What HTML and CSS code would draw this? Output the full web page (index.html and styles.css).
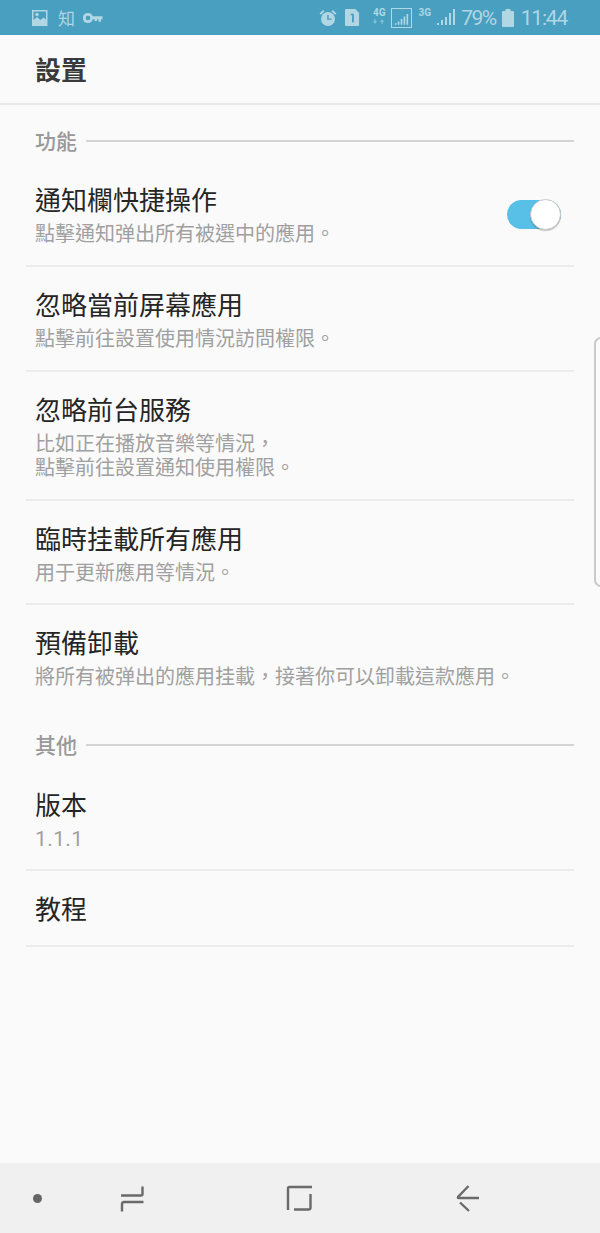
FILE: index.html
```html
<!DOCTYPE html>
<html lang="zh-Hant">
<head>
<meta charset="utf-8">
<title>設置</title>
<link rel="stylesheet" href="styles.css">
</head>
<body>
<div class="phone">
  <div class="status">
    <div class="status-left">
      <svg class="ic" width="18" height="18" viewBox="0 0 18 18"><path fill-rule="evenodd" d="M1 1h15.500v16H1zM2.500 2.500v8.500l3.500-3 3.500 3 3-2.500 2.500 2V2.500z"/><circle cx="6" cy="5.500" r="1.700"/></svg>
      <span class="st-zhi">知</span>
      <svg class="ic key" width="20" height="12" viewBox="0 0 20 12"><path fill-rule="evenodd" d="M5 1a5 5 0 0 1 4.700 3.300H19.500v3h-1.500v2.500h-2.500V7.300h-1.500v1.700h-2.500V7.300H9.700A5 5 0 1 1 5 1zM5 3.700a2.300 2.300 0 1 0 0 4.600 2.300 2.300 0 0 0 0-4.600z"/></svg>
    </div>
    <div class="status-right">
      <svg class="ic" width="18" height="18" viewBox="0 0 18 18"><path fill-rule="evenodd" d="M9 3a7 7 0 1 1 0 14A7 7 0 0 1 9 3zM8.200 6v4.800h4.300V9.400H9.700V6z"/><path d="M0.500 4.500 4 1l1.500 1.200L2 5.800zM17.500 4.500 14 1l-1.500 1.200L16 5.800z"/></svg>
      <svg class="ic sim" width="15" height="17" viewBox="0 0 16 18"><path fill-rule="evenodd" d="M1 0h10l4 4v13a1 1 0 0 1-1 1H1a1 1 0 0 1-1-1V1a1 1 0 0 1 1-1zM6 5v1.500h1.500V14h2V5z"/></svg>
      <div class="net"><span class="net-label">4G</span><svg width="12" height="5" viewBox="0 0 12 5" class="ic dim"><path d="M2 5 0 2h1.400V0h1.200v2H4zM9 0l2 3H9.600v2H8.400V3H7z"/></svg></div>
      <div class="signal-box"><svg class="ic" width="18" height="14" viewBox="0 0 18 14"><path d="M1 12h2v2H1zM4.500 10h2v4h-2zM8 7h2v7H8zM11.500 4h2v10h-2zM15 1h2v13h-2z"/></svg></div>
      <div class="net net-3g"><span class="net-label">3G</span></div>
      <svg class="ic signal" width="18" height="18" viewBox="0 0 18 18"><path d="M0 15h2v2H0zM4 12h2v5H4zM8 9h2v8H8zM12 5h2v12h-2zM16 1h2v16h-2z"/></svg>
      <span class="st-text">79%</span>
      <svg class="ic batt" width="12" height="18" viewBox="0 0 12 18"><path d="M3.500 0h5v2h2.500a1 1 0 0 1 1 1v14a1 1 0 0 1-1 1H1a1 1 0 0 1-1-1V3a1 1 0 0 1 1-1h2.500z"/></svg>
      <span class="st-text time">11:44</span>
    </div>
  </div>

  <header class="topbar"><h1>設置</h1></header>

  <main class="content">
    <div class="section"><span>功能</span><i></i></div>

    <div class="item with-toggle">
      <div>
        <div class="title">通知欄快捷操作</div>
        <div class="sub">點擊通知弹出所有被選中的應用。</div>
      </div>
      <div class="toggle"><b></b></div>
    </div>
    <div class="item">
      <div class="title">忽略當前屏幕應用</div>
      <div class="sub">點擊前往設置使用情況訪問權限。</div>
    </div>
    <div class="item">
      <div class="title">忽略前台服務</div>
      <div class="sub">比如正在播放音樂等情況，<br>點擊前往設置通知使用權限。</div>
    </div>
    <div class="item short">
      <div class="title">臨時挂載所有應用</div>
      <div class="sub">用于更新應用等情況。</div>
    </div>
    <div class="item last">
      <div class="title">預備卸載</div>
      <div class="sub">將所有被弹出的應用挂載，接著你可以卸載這款應用。</div>
    </div>

    <div class="section"><span>其他</span><i></i></div>

    <div class="item version">
      <div class="title">版本</div>
      <div class="sub num">1.1.1</div>
    </div>
    <div class="item single">
      <div class="title">教程</div>
    </div>
  </main>

  <div class="edge-handle"></div>

  <nav class="navbar">
    <span class="dot"></span>
    <svg class="nav-recent" width="26" height="28" viewBox="0 0 26 28"><path d="M1 10.500H21Q22.500 10.500 22.500 9V1.500M23.500 17H4Q2 17 2 19V26.500"/></svg>
    <svg class="nav-home" width="26" height="26" viewBox="0 0 26 26"><path d="M2 25V3.500Q2 2 3.500 2H26M8 24.500H22.500Q24.500 24.500 24.500 22.500V9"/></svg>
    <svg class="nav-back" width="26" height="28" viewBox="0 0 26 28"><path d="M12.500 1 2 12Q1.500 13 2.500 13H23M4 17.500 13 26"/></svg>
  </nav>
</div>
</body>
</html>
```
FILE: styles.css
```css
* { box-sizing: border-box; }
html, body { margin: 0; padding: 0; }
body { font-family: "Noto Sans CJK TC", "Noto Sans CJK SC", Roboto, sans-serif; background: #fafafa; }
.phone { position: relative; width: 600px; height: 1233px; display: flex; flex-direction: column; background: #fafafa; overflow: hidden; }

.status { height: 35px; background: #489fbf; display: flex; justify-content: space-between; align-items: center; padding: 0 33px 0 31px; color: #b1d6e4; flex: none; }
.status-left, .status-right { display: flex; align-items: center; }
.ic { fill: #b1d6e4; display: block; }
.dim { opacity: .6; }
.st-zhi { font-size: 17px; line-height: 20px; margin-left: 9px; margin-right: 8px; }
.status-right .sim { margin-left: 8px; }
.net { display: flex; flex-direction: column; align-items: center; margin-left: 12px; width: 14px; height: 22px; }
.net-label { font: 700 10px/12px Roboto, sans-serif; }
.net-3g { margin-left: 6px; width: 13px; }
.signal-box { width: 21px; height: 20px; border: 1px solid #b1d6e4; margin-left: 5px; display: flex; align-items: flex-end; justify-content: center; padding: 0 0 2px; }
.signal-box svg { width: 15px; height: 12px; }
.signal { margin-left: 6px; margin-top: -1px; }
.st-text { font: 400 21px/24px Roboto, sans-serif; letter-spacing: -1.500px; margin-left: 6px; }
.batt { margin-left: 6px; }
.time { margin-left: 7px; letter-spacing: -1.200px; }

.topbar { height: 70px; flex: none; border-bottom: 2px solid #e8e8e8; padding: 0 35px; display: flex; align-items: center; }
.topbar h1 { margin: 0; font-size: 26px; line-height: 36px; font-weight: 700; color: #3a3a3a; }

.content { flex: 1; padding: 0 26px; }
.section { display: flex; align-items: center; height: 36px; margin: 18px 0 3px; padding-left: 9px; }
.section span { font-size: 21px; line-height: 28px; font-weight: 500; color: #999; margin-right: 9px; padding-bottom: 3px; }
.section i { flex: 1; height: 2px; background: #d4d4d4; margin-top: -1px; }

.item { border-bottom: 2px solid #ececec; padding: 19px 9px 20px; }
.item.with-toggle { display: flex; justify-content: space-between; align-items: center; padding-right: 13px; }
.item.short { padding-bottom: 19px; }
.item.last { border-bottom: none; padding-bottom: 21px; }
.item.version { padding: 20px 9px 18px; }
.item.single { padding-bottom: 19px; }
.title { font-size: 26px; line-height: 36px; color: #252525; }
.sub { font-size: 20px; line-height: 24px; color: #a0a0a0; margin-top: 4px; }
.sub.num { font-family: Roboto, sans-serif; font-size: 21px; letter-spacing: .4px; margin-top: 5px; }

.toggle { position: relative; width: 54px; height: 29px; margin-top: 3px; border-radius: 15px; background: #58bfe6; }
.toggle b { position: absolute; right: 0; top: -1px; width: 31px; height: 31px; border-radius: 50%; background: #fff; border: 1px solid #c8c8c8; box-shadow: 0 1px 1px rgba(0,0,0,.22); }

.edge-handle { position: absolute; right: -8px; top: 337px; width: 14px; height: 250px; border: 2px solid #c9c9c9; border-radius: 9px; }

.navbar { height: 70px; flex: none; background: #f0f0f0; position: relative; display: flex; }
.navbar svg { position: absolute; fill: none; stroke: #6a6a6a; stroke-width: 2.400; }
.dot { position: absolute; left: 33px; top: 31px; width: 9px; height: 9px; border-radius: 50%; background: #666; }
.nav-recent { left: 120px; top: 22px; }
.nav-home { left: 286px; top: 22px; }
.nav-back { left: 456px; top: 22px; }
```
